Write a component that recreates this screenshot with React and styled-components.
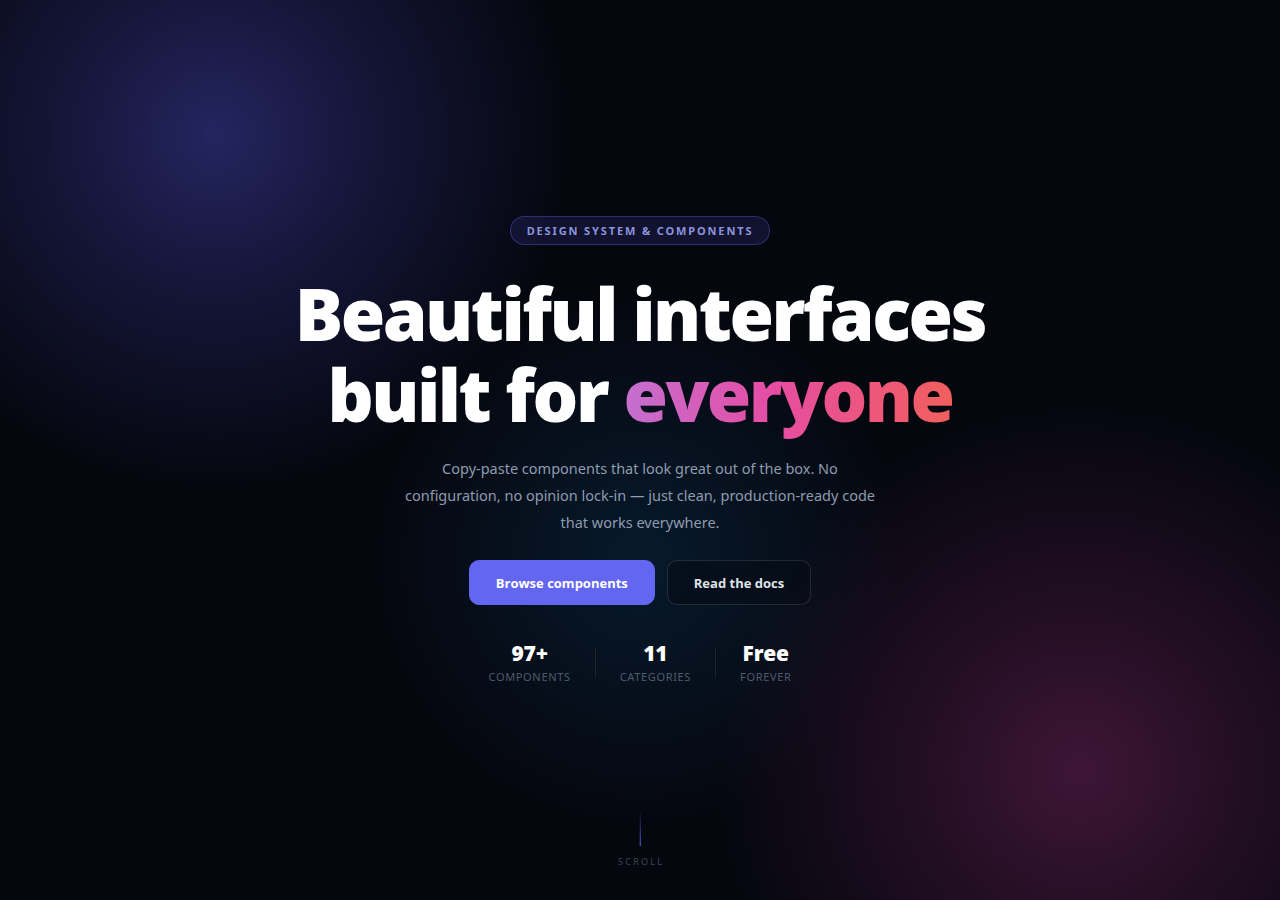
import React from "react"
import styled, { createGlobalStyle } from "styled-components"

const GlobalStyle = createGlobalStyle`
    * { box-sizing: border-box; }
    html, body {
        margin: 0;
        padding: 0;
        background: #05070f;
    }
    body {
        font-family: "Noto Sans", "Open Sans", sans-serif;
        color: #fff;
    }
`

const Page = styled.div`
    position: relative;
    min-height: 100vh;
    overflow: hidden;
    display: flex;
    flex-direction: column;
    align-items: center;
    justify-content: center;
    background:
        radial-gradient(circle at 215px 135px, rgba(38, 38, 100, 0.95) 0, rgba(30, 30, 80, 0.65) 150px, rgba(5, 7, 15, 0) 350px),
        radial-gradient(circle at 1080px 770px, rgba(66, 22, 56, 0.95) 0, rgba(50, 18, 45, 0.65) 160px, rgba(5, 7, 15, 0) 360px),
        radial-gradient(circle at 640px 560px, rgba(8, 34, 56, 0.7) 0, rgba(5, 7, 15, 0) 260px),
        #05070f;
`

const Hero = styled.main`
    display: flex;
    flex-direction: column;
    align-items: center;
    text-align: center;
    padding-top: 1px;
`

const Badge = styled.div`
    display: inline-flex;
    align-items: center;
    height: 29px;
    padding: 0 16px;
    border-radius: 999px;
    border: 1px solid rgba(99, 102, 241, 0.35);
    background: rgba(49, 46, 129, 0.28);
    color: #8b93dc;
    font-size: 11px;
    font-weight: 700;
    letter-spacing: 0.17em;
    text-transform: uppercase;
    margin-bottom: 28px;
`

const Title = styled.h1`
    margin: 0 0 21px;
    font-family: "Open Sans", "Noto Sans", sans-serif;
    font-size: 72px;
    font-weight: 800;
    line-height: 1.12;
    letter-spacing: -0.035em;
    color: #fff;
`

const Gradient = styled.span`
    background: linear-gradient(90deg, #c46fd0 0%, #e64da3 45%, #f25f5c 100%);
    -webkit-background-clip: text;
    background-clip: text;
    color: transparent;
`

const Lead = styled.p`
    margin: 0 0 24px;
    max-width: 480px;
    font-size: 14.5px;
    line-height: 27px;
    color: #8e9bb0;
`

const Actions = styled.div`
    display: flex;
    gap: 12px;
    margin-bottom: 35px;
`

const Button = styled.button`
    height: 45px;
    padding: 0 26px;
    border-radius: 10px;
    font-family: "Open Sans", "Noto Sans", sans-serif;
    font-size: 13px;
    font-weight: 700;
    cursor: pointer;
    border: 1px solid ${p => p.primary ? "#6366f1" : "rgba(255, 255, 255, 0.12)"};
    background: ${p => p.primary ? "#6366f1" : "rgba(5, 12, 22, 0.6)"};
    color: ${p => p.primary ? "#fff" : "#dfe3ea"};
`

const Stats = styled.div`
    display: flex;
    align-items: center;
`

const Stat = styled.div`
    display: flex;
    flex-direction: column;
    align-items: center;
    gap: 3px;
    padding: 0 24px;
`

const StatValue = styled.div`
    font-family: "Open Sans", "Noto Sans", sans-serif;
    font-size: 21px;
    font-weight: 800;
    line-height: 26px;
    color: #fff;
    letter-spacing: -0.01em;
`

const StatLabel = styled.div`
    font-size: 11px;
    line-height: 16px;
    letter-spacing: 0.06em;
    text-transform: uppercase;
    color: #4f5b6d;
`

const Divider = styled.div`
    width: 1px;
    height: 30px;
    background: rgba(255, 255, 255, 0.08);
`

const Scroll = styled.div`
    position: absolute;
    left: 50%;
    bottom: 32px;
    transform: translateX(-50%);
    display: flex;
    flex-direction: column;
    align-items: center;
    gap: 9px;
`

const ScrollLine = styled.div`
    width: 1px;
    height: 36px;
    background: linear-gradient(180deg, rgba(99, 102, 241, 0) 0%, #5b5ee8 100%);
`

const ScrollText = styled.div`
    font-size: 9px;
    letter-spacing: 0.25em;
    text-transform: uppercase;
    color: #3b4558;
    padding-left: 0.25em;
`

const stats = [
    { value: "97+", label: "Components" },
    { value: "11", label: "Categories" },
    { value: "Free", label: "Forever" },
]

export default function App() {
    return (
        <>
            <GlobalStyle />
            <Page>
                <Hero>
                    <Badge>Design System &amp; Components</Badge>
                    <Title>
                        Beautiful interfaces<br />
                        built for <Gradient>everyone</Gradient>
                    </Title>
                    <Lead>
                        Copy-paste components that look great out of the box. No configuration, no opinion lock-in — just clean, production-ready code that works everywhere.
                    </Lead>
                    <Actions>
                        <Button primary>Browse components</Button>
                        <Button>Read the docs</Button>
                    </Actions>
                    <Stats>
                        {stats.map((s, i) => (
                            <React.Fragment key={s.label}>
                                {i > 0 && <Divider />}
                                <Stat>
                                    <StatValue>{s.value}</StatValue>
                                    <StatLabel>{s.label}</StatLabel>
                                </Stat>
                            </React.Fragment>
                        ))}
                    </Stats>
                </Hero>
                <Scroll>
                    <ScrollLine />
                    <ScrollText>Scroll</ScrollText>
                </Scroll>
            </Page>
        </>
    )
}
